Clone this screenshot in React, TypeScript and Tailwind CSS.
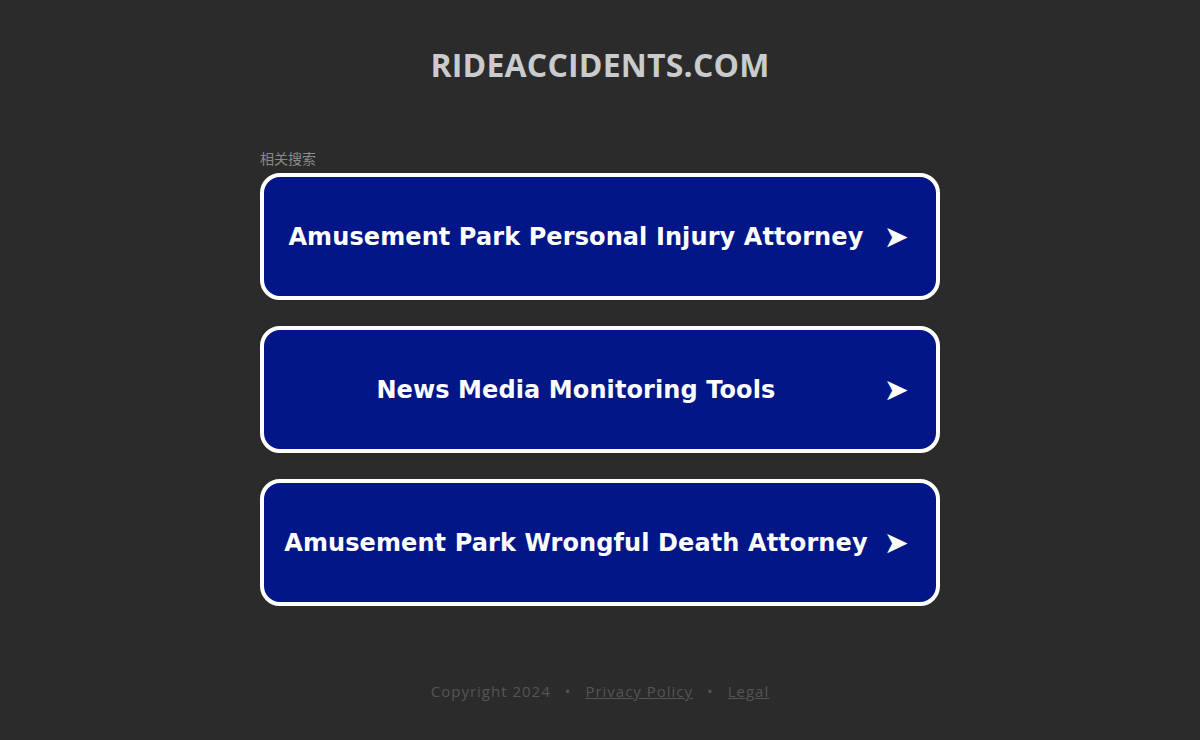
import React from "react";

const links = [
  "Amusement Park Personal Injury Attorney",
  "News Media Monitoring Tools",
  "Amusement Park Wrongful Death Attorney",
];

export default function App() {
  return (
    <div className="min-h-[740px] bg-[#2b2b2b] flex flex-col items-center font-['Open_Sans',sans-serif]">
      <h1 className="mt-[44px] text-[32px] leading-[42px] font-bold tracking-[0.2px] text-[#c9cbcd]">
        RIDEACCIDENTS.COM
      </h1>

      <div className="mt-[64px] w-[680px]">
        <p className="text-[14px] leading-[16px] text-[#8a8a8a] font-['Noto_Sans_CJK_SC',sans-serif]">
          相关搜索
        </p>
        <div className="mt-[7px] flex flex-col gap-[26px]">
          {links.map((t) => (
            <a
              key={t}
              href="#"
              className="h-[127px] flex items-center rounded-[20px] border-4 border-white bg-[#021688] text-white"
            >
              <div className="flex-1 min-w-0 flex justify-center pl-[24px]">
                <span className="whitespace-nowrap text-[24px] font-bold font-['DejaVu_Sans',sans-serif] tracking-[0.1px]">
                  {t}
                </span>
              </div>
              <span className="mr-[27px] ml-[20px] text-[30px] leading-none font-['DejaVu_Sans',sans-serif]">➤</span>
            </a>
          ))}
        </div>
      </div>

      <footer className="mt-[74px] text-[15px] tracking-[1px] text-[#555555] flex items-center gap-[14px]">
        <span>Copyright 2024</span>
        <span>•</span>
        <a href="#" className="underline">Privacy Policy</a>
        <span>•</span>
        <a href="#" className="underline">Legal</a>
      </footer>
    </div>
  );
}
